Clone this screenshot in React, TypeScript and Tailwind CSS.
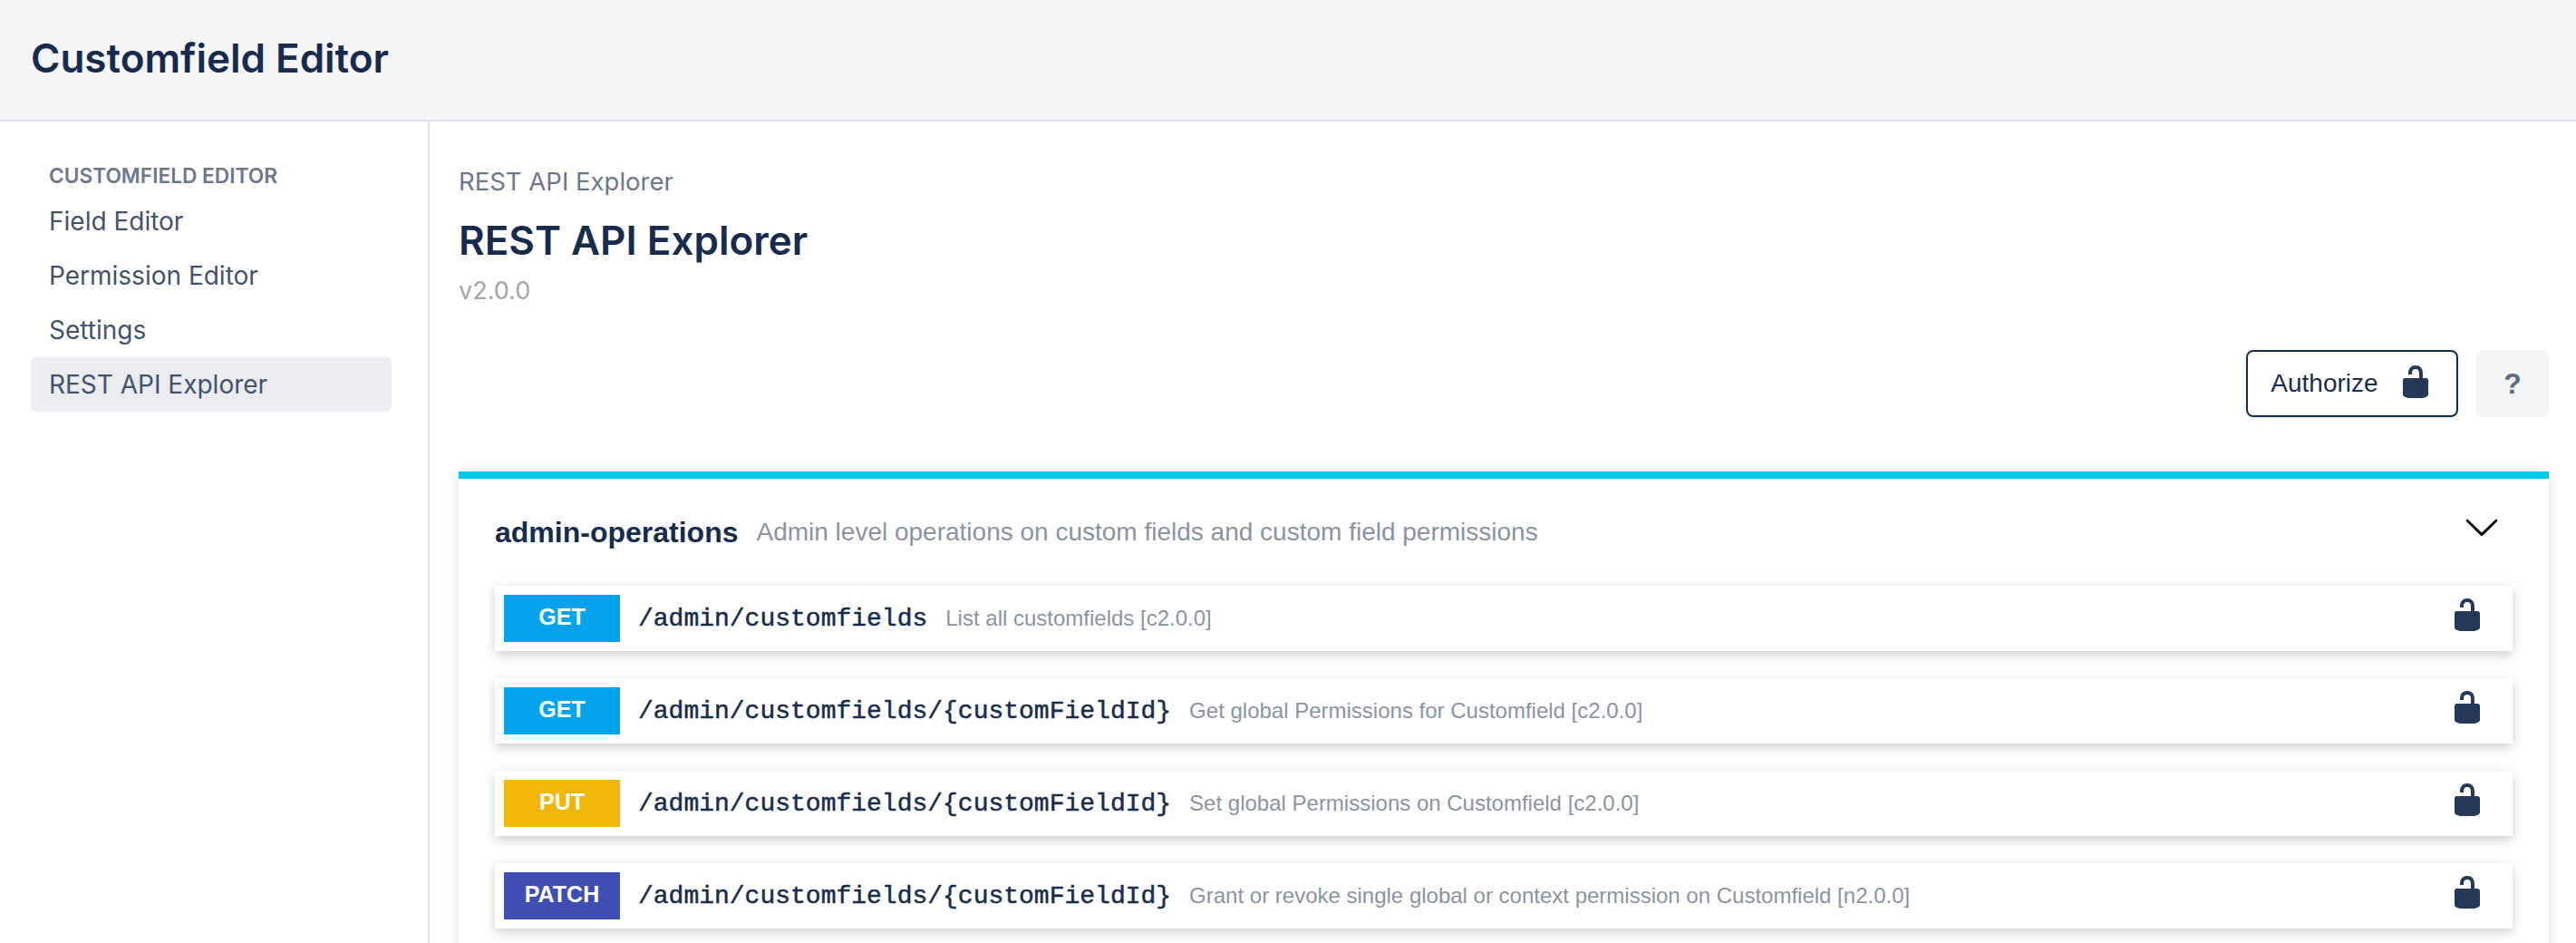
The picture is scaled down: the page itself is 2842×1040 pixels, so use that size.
const LockIcon = ({ className }: { className?: string }) => (
  <svg viewBox="0 0 20 20" className={className} fill="currentColor">
    <path d="M15.8 8H14V5.6C14 2.703 12.665 1 10 1 7.334 1 6 2.703 6 5.6V6h2v-.801C8 3.754 8.797 3 10 3c1.203 0 2 .754 2 2.199V8H4c-.553 0-1 .646-1 1.199V17c0 .549.428 1.139.951 1.307l1.197.387C5.672 18.861 6.55 19 7.1 19h5.8c.549 0 1.428-.139 1.951-.307l1.196-.387c.524-.167.953-.757.953-1.306V9.199C17 8.646 16.352 8 15.8 8z" />
  </svg>
);

const Row = ({
  method,
  color,
  path,
  text,
}: {
  method: string;
  color: string;
  path: string;
  text: string;
}) => {
  return (
    <div className="flex h-[72px] items-center bg-white pl-[10px] pr-[30px] shadow-[0_4px_12px_rgba(0,0,0,0.2)]">
      <div
        className={`flex h-[52px] w-[128px] shrink-0 items-center justify-center pb-[2px] text-[25px] font-bold text-white ${color}`}
      >
        {method}
      </div>
      <span className="ml-[20px] pt-[2px] font-['Liberation_Mono',monospace] text-[28px] text-[#172b4d] [-webkit-text-stroke:0.5px_#172b4d]">
        {path}
      </span>
      <span className="ml-[20px] flex-1 text-[24px] text-[#8993a4]">{text}</span>
      <LockIcon className="mb-[8px] h-[40px] w-[40px] text-[#253858]" />
    </div>
  );
};

export default function App() {
  return (
    <div className="flex h-[1040px] flex-col overflow-hidden bg-white font-['Inter',sans-serif] text-[#172b4d]">
      <header className="flex h-[134px] shrink-0 items-center border-b-2 border-[#dfe1e6] bg-[#f4f5f7] pb-[4px] pl-[34px]">
        <h1 className="text-[44px] font-semibold">Customfield Editor</h1>
      </header>
      <div className="flex flex-1">
        <aside className="w-[474px] shrink-0 border-r-2 border-[#dfe1e6] pl-[34px] pr-[40px] pt-[44px]">
          <div className="mb-[4px] pl-[20px] text-[22.7px] leading-[32px] font-semibold text-[#6b778c] uppercase">
            Customfield Editor
          </div>
          {["Field Editor", "Permission Editor", "Settings", "REST API Explorer"].map((item, i) => (
            <div
              key={item}
              className={`flex h-[60px] items-center rounded-[6px] pl-[20px] text-[28px] text-[#42526e] ${
                i === 3 ? "bg-[#ebecf0]" : ""
              }`}
            >
              {item}
            </div>
          ))}
        </aside>
        <main className="min-w-0 flex-1 pl-[32px] pr-[30px]">
          <div className="mt-[48px] text-[27.5px] leading-[36px] text-[#6b778c]">REST API Explorer</div>
          <h2 className="mt-[17px] text-[44px] leading-[60px] font-semibold">REST API Explorer</h2>
          <div className="mt-[8px] text-[27px] leading-[36px] text-[#a5a5a5]">v2.0.0</div>
          <div className="mt-[47px] flex justify-end gap-[20px] font-['Liberation_Sans',sans-serif]">
            <button className="flex h-[74px] w-[234px] items-center justify-center gap-[21px] rounded-[8px] border-2 border-[#172b4d] text-[28px] shadow-[0_1px_3px_rgba(0,0,0,0.1)]">
              Authorize
              <LockIcon className="mb-[4px] h-[40px] w-[40px] text-[#253858]" />
            </button>
            <button className="h-[74px] w-[80px] rounded-[6px] bg-[#f4f5f7] text-[32px] font-bold text-[#5e6c84]">?</button>
          </div>
          <section className="mt-[60px] border-t-[8px] border-[#00c7e6] px-[40px] font-['Liberation_Sans',sans-serif] shadow-[0_0_12px_rgba(0,0,0,0.15)]">
            <div className="flex h-[118px] items-center">
              <h3 className="text-[32px] font-bold">admin-operations</h3>
              <p className="ml-[20px] flex-1 text-[28px] text-[#8993a4]">
                Admin level operations on custom fields and custom field permissions
              </p>
              <svg viewBox="0 0 20 20" className="mb-[12px] mr-[14px] h-[40px] w-[40px]">
                <path d="M17.418 6.109c.272-.268.709-.268.979 0s.271.701 0 .969l-7.908 7.83c-.27.268-.707.268-.979 0l-7.908-7.83c-.27-.268-.27-.701 0-.969.271-.268.709-.268.979 0L10 13.25l7.418-7.141z" />
              </svg>
            </div>
            <div className="flex flex-col gap-[30px] pb-[40px]">
              <Row method="GET" color="bg-[#03a4ed]" path="/admin/customfields" text="List all customfields [c2.0.0]" />
              <Row method="GET" color="bg-[#03a4ed]" path="/admin/customfields/{customFieldId}" text="Get global Permissions for Customfield [c2.0.0]" />
              <Row method="PUT" color="bg-[#f0b606]" path="/admin/customfields/{customFieldId}" text="Set global Permissions on Customfield [c2.0.0]" />
              <Row method="PATCH" color="bg-[#3f4eb3]" path="/admin/customfields/{customFieldId}" text="Grant or revoke single global or context permission on Customfield [n2.0.0]" />
            </div>
          </section>
        </main>
      </div>
    </div>
  );
}
